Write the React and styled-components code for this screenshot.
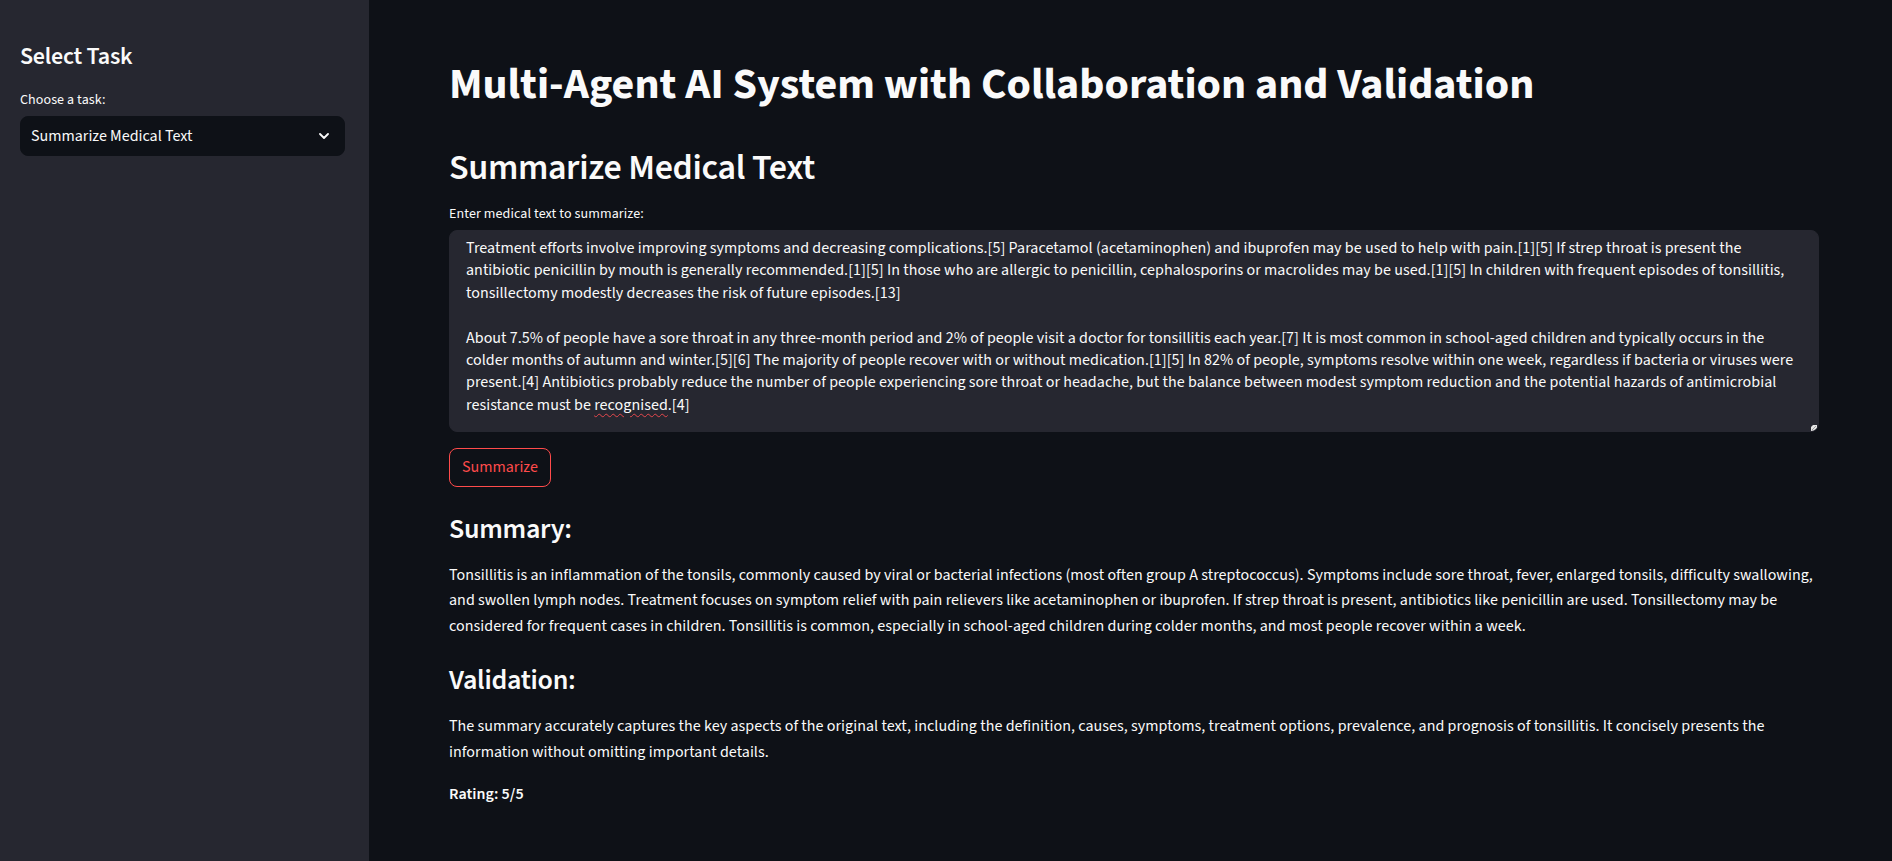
import React from "react";
import styled, { createGlobalStyle } from "styled-components";

const GlobalStyle = createGlobalStyle`
  html, body {
    margin: 0;
    padding: 0;
    background: #0e1117;
  }
  body {
    font-family: "Source Sans 3", "Source Sans Pro", "Lato", sans-serif;
    color: #fafafa;
    -webkit-font-smoothing: antialiased;
  }
  * { box-sizing: border-box; }
`;

const Shell = styled.div`
  display: flex;
  min-height: 100vh;
  background: #0e1117;
`;

const Sidebar = styled.aside`
  width: 369px;
  flex-shrink: 0;
  background: #262730;
  padding: 43px 24px 0 20px;
  display: flex;
  flex-direction: column;
`;

const SideTitle = styled.h2`
  margin: 0;
  font-size: 24px;
  font-weight: 600;
  line-height: 1.2;
  letter-spacing: -0.01em;
  color: #fafafa;
`;

const FieldLabel = styled.label`
  display: block;
  margin: ${(p) => p.$top}px 0 4px;
  font-size: 14px;
  line-height: 24px;
  letter-spacing: 0.1px;
  color: #fafafa;
`;

const SelectBox = styled.div`
  height: 40px;
  display: flex;
  align-items: center;
  justify-content: space-between;
  padding: 0 15px 0 10px;
  background: #0e1117;
  border: 1px solid #0e1117;
  border-radius: 8px;
  font-size: 16px;
  line-height: 1.4;
  color: #fafafa;
  cursor: pointer;
`;

const Chevron = styled.svg`
  width: 10px;
  height: 6px;
  flex-shrink: 0;
`;

const Main = styled.main`
  flex: 1;
  min-width: 0;
  padding: 59px 73px 40px 80px;
  display: flex;
  flex-direction: column;
`;

const Title = styled.h1`
  margin: 0;
  font-size: 44px;
  font-weight: 700;
  line-height: 1.2;
  color: #fafafa;
`;

const Header = styled.h2`
  margin: 34px 0 0;
  font-size: 36px;
  font-weight: 600;
  line-height: 1.2;
  letter-spacing: -0.01em;
  color: #fafafa;
`;

const TextArea = styled.div`
  position: relative;
  height: 202px;
  overflow: hidden;
  padding: 6px 24px 15px 16px;
  background: #262730;
  border: 1px solid #262730;
  border-radius: 8px;
  font-size: 16px;
  line-height: 1.4;
  letter-spacing: 0.045px;
  white-space: pre-wrap;
  color: #fafafa;
`;

const Misspelled = styled.span`
  text-decoration: underline wavy #e5484d;
  text-decoration-thickness: 1px;
  text-underline-offset: 3px;
`;

const ResizeGrip = styled.svg`
  position: absolute;
  right: 1px;
  bottom: 0;
  width: 6px;
  height: 6px;
`;

const Button = styled.button`
  align-self: flex-start;
  margin-top: 16px;
  height: 39px;
  padding: 0 12px;
  background: transparent;
  border: 1px solid #ff4b4b;
  border-radius: 8px;
  color: #ff4b4b;
  font-family: inherit;
  font-size: 16px;
  line-height: 1.6;
  cursor: pointer;
`;

const SectionHeading = styled.h3`
  margin: ${(p) => p.$top}px 0 0;
  font-size: 28px;
  font-weight: 600;
  line-height: 1.2;
  letter-spacing: -0.01em;
  color: #fafafa;
`;

const Paragraph = styled.p`
  margin: ${(p) => p.$top ?? 16}px 0 0;
  font-size: 16px;
  line-height: 1.6;
  letter-spacing: 0.045px;
  color: #fafafa;
`;

const Strong = styled.strong`
  font-weight: 600;
`;

const inputText1 =
  "Treatment efforts involve improving symptoms and decreasing complications.[5] Paracetamol (acetaminophen) and ibuprofen may be used to help with pain.[1][5] If strep throat is present the antibiotic penicillin by mouth is generally recommended.[1][5] In those who are allergic to penicillin, cephalosporins or macrolides may be used.[1][5] In children with frequent episodes of tonsillitis, tonsillectomy modestly decreases the risk of future episodes.[13]";

const inputText2 =
  "About 7.5% of people have a sore throat in any three-month period and 2% of people visit a doctor for tonsillitis each year.[7] It is most common in school-aged children and typically occurs in the colder months of autumn and winter.[5][6] The majority of people recover with or without medication.[1][5] In 82% of people, symptoms resolve within one week, regardless if bacteria or viruses were present.[4] Antibiotics probably reduce the number of people experiencing sore throat or headache, but the balance between modest symptom reduction and the potential hazards of antimicrobial resistance must be ";

const summary =
  "Tonsillitis is an inflammation of the tonsils, commonly caused by viral or bacterial infections (most often group A streptococcus). Symptoms include sore throat, fever, enlarged tonsils, difficulty swallowing, and swollen lymph nodes. Treatment focuses on symptom relief with pain relievers like acetaminophen or ibuprofen. If strep throat is present, antibiotics like penicillin are used. Tonsillectomy may be considered for frequent cases in children. Tonsillitis is common, especially in school-aged children during colder months, and most people recover within a week.";

const validation =
  "The summary accurately captures the key aspects of the original text, including the definition, causes, symptoms, treatment options, prevalence, and prognosis of tonsillitis. It concisely presents the information without omitting important details.";

export default function App() {
  return (
    <>
      <GlobalStyle />
      <Shell>
        <Sidebar>
          <SideTitle>Select Task</SideTitle>
          <FieldLabel $top={16}>Choose a task:</FieldLabel>
          <SelectBox role="combobox" aria-expanded="false">
            <span>Summarize Medical Text</span>
            <Chevron viewBox="0 0 10 6" aria-hidden="true">
              <polyline
                points="1,1 5,5 9,1"
                fill="none"
                stroke="#fafafa"
                strokeWidth="1.8"
                strokeLinecap="round"
                strokeLinejoin="round"
              />
            </Chevron>
          </SelectBox>
        </Sidebar>

        <Main>
          <Title>Multi-Agent AI System with Collaboration and Validation</Title>
          <Header>Summarize Medical Text</Header>
          <FieldLabel $top={13}>Enter medical text to summarize:</FieldLabel>
          <TextArea role="textbox" aria-multiline="true">
            {inputText1}
            {"\n\n"}
            {inputText2}
            <Misspelled>recognised</Misspelled>
            {".[4]"}
            <ResizeGrip viewBox="0 0 6 6" aria-hidden="true">
              <polygon points="2,0 6,0 6,6 0,6 0,2" fill="#e6e6e6" />
              <line x1="1" y1="5" x2="5" y2="1" stroke="#8a8a8a" strokeWidth="0.8" />
            </ResizeGrip>
          </TextArea>
          <Button type="button">Summarize</Button>

          <SectionHeading $top={26}>Summary:</SectionHeading>
          <Paragraph>{summary}</Paragraph>

          <SectionHeading $top={25}>Validation:</SectionHeading>
          <Paragraph>{validation}</Paragraph>
          <Paragraph $top={17}>
            <Strong>Rating: 5/5</Strong>
          </Paragraph>
        </Main>
      </Shell>
    </>
  );
}
